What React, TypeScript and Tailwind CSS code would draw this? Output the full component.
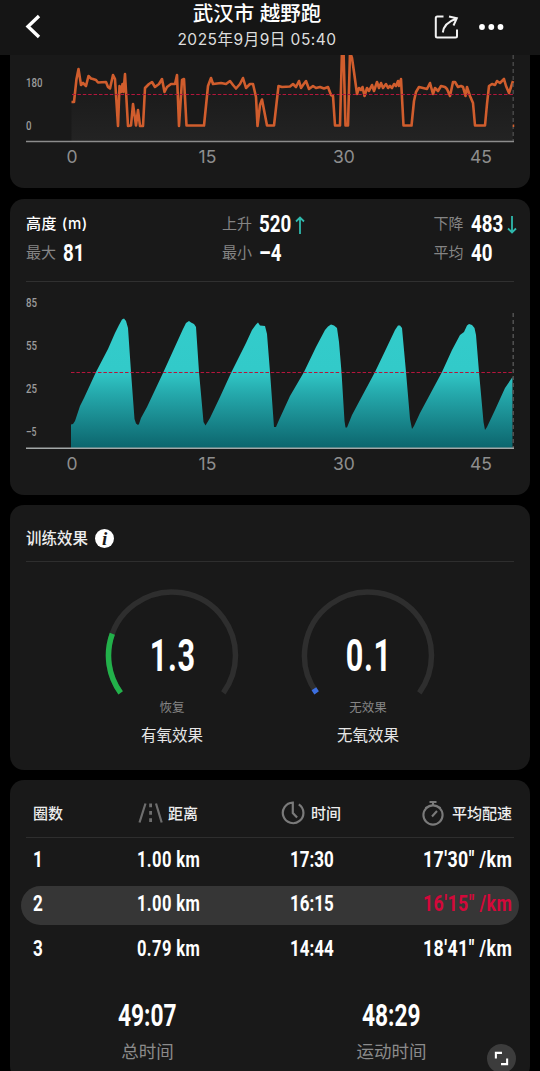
import type { ReactNode } from "react";

const CJK = "font-['Inter','Noto_Sans_CJK_SC',sans-serif]";

const PULSE =
  "71.5,102 74,102 76.5,79 78.5,69 81,85 83,83 86,86 88.5,76 91,78.5 93,79 96,80 98,82.5 106,82 108,87 110,88.5 113,75 115,79 118,126 119.5,86 121,92 122.5,84 123.5,92 125,74 128,126 131,125.5 133,104 136,125.5 138,110 140,126 143,126 145,88 149,84 152,82 155,87 159,84 162,79 164.5,92 167,87 171,84 175,84 177,75 179,126 182,80 184,79 186.5,125.5 204,125.5 208,86 211,78 213,84 221,83 226,84 230,81 233,85 236,88.5 240,84 243,78 246,88 250,84 253,84 256,97 257.5,126 260,105 262,99.5 267,125.5 274,125.5 278.5,86 282,87 290,86.5 293,84 296,87 299,81 301,88 303,85 306,81 309,89 313,86 316,88 320,87 324,88.5 328,87 331,95 333,96 335,125.5 340,125.5 342,50 343.5,50 345.5,125.5 348,125.5 350,52 352,58 354,72 357,94 359,88 361,90 362.5,87 364.5,96 367,88 369,91 372,85 374,91 377,82 379,88 381,83 383,88 386,84 388,88 390,86 392,88 394,84 396,86 398,81 399,86 401,79 403.5,125.5 411.5,125.5 414,101 416,92 419,87 423,88 427,89 430,83 433,94 435,88 438,91 441,86 445,87 447,89 450,96 453,82 455,82 458,87 461,86 463,87 465.5,96 467,87 470,96 473,103 475,125.5 485,125.5 487,104 489,86 492,84 495,85 497,81 500,83 504,79 506,86 509,93 511,87 513,81";

const ALTITUDE =
  "71,448 71,424.5 73,424 75,421 77,415 80,406 84,398 96,372 108,349 115,333 119,325 122,319.5 124,318.5 126,321 128,328 131,372 134.5,419 136,423.5 138,425 139,424 141,418 147,407 163,373 173,351 183,329 186,323 189,321 191,322.5 194,324 196,327 199,372 203.5,422 205.5,425.5 207,423 210,418 220,397 231,373 241,353 246,343 252,330 256,324.5 258,322.5 260,325.5 265,326 267,334 270,372 274,427 276,427 279,420 290,396 304,372 316,347 325,330 328,326.5 331,324.5 334,325.5 337,328 339,342 341.5,372 344.5,421 345.5,427.5 347,427.5 352,415 360,400 375,372 386,349 395,330 398,325.5 400,325.5 402,328 403,339 406,372 410,419 412,429 414,426 420,413 442,372 452,350 460,335 464,332 467,325.5 469,324 472,325 474.5,328 476,335 479,372 483.5,422 485,430 487,427 495,410 505,388 512.5,377 512.5,448";

function Num({ children, className = "" }: { children: ReactNode; className?: string }) {
  return (
    <span
      className={`inline-block whitespace-nowrap font-[Roboto,sans-serif] font-bold ${className}`}
    >
      {children}
    </span>
  );
}

function Stat({ label, value, arrow }: { label: string; value: string; arrow?: "up" | "down" }) {
  return (
    <div className="flex h-[29px] items-center">
      <span className="w-[37px] shrink-0 whitespace-nowrap text-[15px] text-[#858585]">{label}</span>
      <span className="w-[36px] shrink-0">
        <Num className="origin-left scale-x-[.78] text-2xl leading-none">{value}</Num>
      </span>
      {arrow && (
        <svg
          className={`size-[18px] shrink-0 ${arrow === "down" ? "-ml-[4px] rotate-180" : "-ml-[4px]"}`}
          viewBox="0 0 18 18"
          fill="none"
          stroke="#2fb9ad"
          strokeWidth="1.8"
        >
          <path d="M9 18V1.5M5 5.5 9 1.5l4 4" />
        </svg>
      )}
    </div>
  );
}

function Ticks({ items, y }: { items: [string, number, number][]; y: number }) {
  return (
    <>
      {items.map(([label, ty, w]) => (
        <text
          key={label}
          x="26"
          y={ty}
          textLength={w}
          lengthAdjust="spacingAndGlyphs"
          fontSize="13"
          fill="#9b9b9b"
          className="font-[Roboto,sans-serif] font-medium"
        >
          {label}
        </text>
      ))}
      {[0, 15, 30, 45].map((m, i) => (
        <text
          key={m}
          x={[72, 207.5, 344, 481][i]}
          y={y}
          fontSize="17.5"
          textAnchor="middle"
          fill="#8e8e8e"
          className="font-[Inter,sans-serif]"
        >
          {m}
        </text>
      ))}
    </>
  );
}

function Gauge({
  value,
  sweep,
  color,
  level,
  name,
}: {
  value: string;
  sweep: number;
  color: string;
  level: string;
  name: string;
}) {
  return (
    <div className="flex w-[134px] flex-col items-center">
      <div className="relative h-[108px] w-[134px]">
        <svg className="block" width="134" height="108" viewBox="0 0 134 108" fill="none" strokeWidth="5.5">
          <g transform="rotate(144 67 67.5)">
            <circle cx="67" cy="67.5" r="63.5" stroke="#2e2e2e" pathLength="360" strokeDasharray="252 360" />
            <circle cx="67" cy="67.5" r="63.5" stroke={color} pathLength="360" strokeDasharray={`${sweep} 360`} />
          </g>
        </svg>
        <div className="absolute inset-x-0 top-[45px] pl-[2px] text-center">
          <Num className="scale-x-[.68] text-[45px] leading-none tracking-[1px]">{value}</Num>
        </div>
      </div>
      <span className="mt-[2px] text-[12.5px] leading-5 text-[#858585]">{level}</span>
      <span className="mt-2 text-[15.5px] leading-5 text-[#e6e6e6]">{name}</span>
    </div>
  );
}

const LAPS = [
  ["1", "1.00 km", "17:30", "17'30\" /km"],
  ["2", "1.00 km", "16:15", "16'15\" /km"],
  ["3", "0.79 km", "14:44", "18'41\" /km"],
];

export default function App() {
  return (
    <div className={`h-[1071px] w-[540px] overflow-hidden bg-black text-white ${CJK}`}>
      {/* Top bar */}
      <header className="flex h-[55px] bg-[#151515]">
        <div className="w-[130px] pl-[24px] pt-[13px]">
          <svg width="18" height="27" viewBox="0 0 18 27" fill="none" stroke="#fff" strokeWidth="3.4">
            <path d="M15 3 4 13.5l11 10.500" />
          </svg>
        </div>
        <div className="w-[254px] text-center">
          <h1 className="mt-[2px] text-[20.5px] font-medium leading-6">武汉市 越野跑</h1>
          <p className="mt-1 whitespace-nowrap text-[15.500px] leading-5 tracking-[0.500px] text-[#dedede]">
            2025年9月9日 05:40
          </p>
        </div>
        <div className="flex items-start gap-[18px] pl-[48.500px] pt-[14px]">
          <svg width="27" height="26" viewBox="0 0 27 26" fill="none" stroke="#f2f2f2" strokeWidth="2">
            <path d="M10.500 2.500H4.300Q2.800 2.500 2.800 4V22Q2.800 23.500 4.300 23.500H22.500Q24 23.500 24 22V15.500" />
            <path d="M9.800 18.500Q11 9 22.500 5M16 2.500 23.800 4.300 20.500 11.500" />
          </svg>
          <svg className="mt-[9px]" width="26" height="8" viewBox="0 0 26 8" fill="#fff">
            <circle cx="4" cy="4" r="2.900" />
            <circle cx="13.300" cy="4" r="2.900" />
            <circle cx="22.500" cy="4" r="2.900" />
          </svg>
        </div>
      </header>

      {/* Pulse chart */}
      <section className="mx-[10px] h-[133px] overflow-hidden rounded-b-[14px] bg-[#191919]">
        <svg className="block" width="520" height="133" viewBox="10 55 520 133" fill="none">
          <defs>
            <linearGradient id="pulse" gradientUnits="userSpaceOnUse" x1="0" y1="80" x2="0" y2="141">
              <stop offset="0" stopColor="#191919" />
              <stop offset="1" stopColor="#232323" />
            </linearGradient>
          </defs>
          <polygon points={`71.5,141 ${PULSE} 513,141`} fill="url(#pulse)" />
          <polyline points={PULSE} stroke="#d05d2d" strokeWidth="2.6" strokeLinejoin="round" />
          <path d="M513.200 55V141" stroke="#4e4e4e" strokeWidth="1.300" strokeDasharray="4 3" />
          <path d="M72 94.500H513" stroke="#b5163c" strokeWidth="1.200" strokeDasharray="3.500 1.900" />
          <path d="M513.500 124.500v2.500" stroke="#d4602e" strokeWidth="1.500" />
          <path d="M26 141.500H514" stroke="#8c8c8c" strokeWidth="1.400" />
          <Ticks items={[["180", 87, 16.5], ["0", 129.5, 5.5]]} y={163.3} />
        </svg>
      </section>

      {/* Altitude */}
      <section className="mx-[10px] mt-[11px] h-[295.500px] rounded-[14px] bg-[#191919]">
        <div className="mx-4 flex h-[83px] border-b border-[#303030] pt-[11px]">
          <div className="w-[196px]">
            <div className="flex h-[29px] items-center text-[15px] font-medium tracking-[0.6px]">高度 (m)</div>
            <Stat label="最大" value="81" />
          </div>
          <div className="w-[211.500px]">
            <Stat label="上升" value="520" arrow="up" />
            <Stat label="最小" value="–4" />
          </div>
          <div className="w-[80px]">
            <Stat label="下降" value="483" arrow="down" />
            <Stat label="平均" value="40" />
          </div>
        </div>
        <svg className="block" width="520" height="212" viewBox="10 282 520 212" fill="none">
          <defs>
            <linearGradient id="alt" gradientUnits="userSpaceOnUse" x1="0" y1="318" x2="0" y2="448">
              <stop offset="0" stopColor="#33cccb" />
              <stop offset=".4" stopColor="#32cac9" />
              <stop offset=".58" stopColor="#25a9ac" />
              <stop offset="1" stopColor="#0c656d" />
            </linearGradient>
          </defs>
          <polygon points={ALTITUDE} fill="url(#alt)" />
          <path d="M513.200 313V448" stroke="#5a5a5a" strokeWidth="1.300" strokeDasharray="4 3" />
          <path d="M71 372.500H513.500" stroke="#b5163c" strokeWidth="1.200" strokeDasharray="3.500 1.900" />
          <path d="M26 448.200H514" stroke="#a3a8a8" strokeWidth="1.500" />
          <Ticks items={[["85", 306.5, 11], ["55", 349.5, 11], ["25", 392.5, 11], ["–5", 435.5, 10.5]]} y={470} />
        </svg>
      </section>

      {/* Training effect */}
      <section className="mx-[10px] mt-[10.500px] h-[264.500px] rounded-[14px] bg-[#191919]">
        <div className="mx-4 flex h-[57px] items-center gap-[7px] border-b border-[#2e2e2e] pt-[10px]">
          <h2 className="mt-[2px] text-[15.500px] font-medium text-[#ededed]">训练效果</h2>
          <span className="flex size-[19px] items-center justify-center rounded-full bg-white font-['Liberation_Serif',serif] text-[19px] font-bold italic leading-none text-[#191919]">
            i
          </span>
        </div>
        <div className="flex gap-[62px] pl-[95px] pt-[26px]">
          <Gauge value="1.3" sweep={56} color="#22b14a" level="恢复" name="有氧效果" />
          <Gauge value="0.1" sweep={4.5} color="#3c6fe0" level="无效果" name="无氧效果" />
        </div>
      </section>

      {/* Laps */}
      <section className="relative mx-[10px] mt-[10.500px] h-[300px] rounded-[14px] bg-[#191919]">
        <div className="mx-4 flex h-[57.500px] items-center border-b border-[#2e2e2e] pl-[7px] pt-[12px] text-[15px] font-medium text-[#ededed]">
          <span className="w-[104px]">圈数</span>
          <span className="flex w-[144px] items-center gap-[5px]">
            <svg className="-mt-[2px]" width="26" height="22" viewBox="0 0 26 22" fill="none" stroke="#6e6e6e" strokeWidth="2.200">
              <path d="M8.500 1.500 2.500 20.500M19 1.500l5.700 19" />
              <path d="M13.600 1.500V20.500" strokeDasharray="3.800 3.600" strokeWidth="2.800" />
            </svg>
            距离
          </span>
          <span className="flex w-[140px] items-center gap-[6px]">
            <svg className="-mt-[2px]" width="24" height="24" viewBox="0 0 24 24" fill="none" stroke="#7a7a7a" strokeWidth="2.200">
              <path d="M17.800 3.300A10.300 10.300 0 1 1 11.800 1.600V12l4.300 4.600" />
            </svg>
            时间
          </span>
          <span className="flex items-center gap-[7px] whitespace-nowrap">
            <svg className="-mt-[3px]" width="24" height="26" viewBox="0 0 24 26" fill="none" stroke="#7a7a7a" strokeWidth="2.100">
              <circle cx="12" cy="15" r="9.600" />
              <path d="M8.500 2h7M12 2v3.500M11 16.500 16 11M4.500 7 6 8.500M19.500 7 18 8.500" />
            </svg>
            平均配速
          </span>
        </div>
        {LAPS.map(([lap, dist, time, pace], i) => (
          <div
            key={lap}
            className={`mx-[11px] grid grid-cols-[103.500px_153px_133px_1fr] items-center pl-3 text-[22.500px] leading-none ${
              i === 1 ? "mt-[4px] h-[39px] rounded-full bg-[#363636] pb-[3px]" : i === 0 ? "h-[44px]" : "mt-[2px] h-[44px]"
            }`}
          >
            <Num className="origin-left scale-x-[.76]">{lap}</Num>
            <Num className="origin-left scale-x-[.735] tracking-[0.5px]">{dist}</Num>
            <Num className="origin-left scale-x-[.755]">{time}</Num>
            <Num className={`origin-left scale-x-[.79] tracking-[0.5px] ${i === 1 ? "text-[#d3083a]" : ""}`}>{pace}</Num>
          </div>
        ))}
        <div className="mt-[28px] flex pl-[15px]">
          <div className="w-[244px] pl-px text-center">
            <Num className="scale-x-[.71] text-[32px] leading-none">49:07</Num>
            <div className="mt-[8px] text-[17.500px] leading-6 text-[#8b8b8b]">总时间</div>
          </div>
          <div className="w-[244px] pl-px text-center">
            <Num className="scale-x-[.71] text-[32px] leading-none">48:29</Num>
            <div className="mt-[8px] text-[17.500px] leading-6 text-[#8b8b8b]">运动时间</div>
          </div>
        </div>
        {/* Expand button */}
        <button className="absolute right-[14px] top-[264px] flex size-[29px] items-center justify-center rounded-full bg-[#3c3c3c]">
          <svg width="15" height="15" viewBox="0 0 16 16" fill="none" stroke="#fff" strokeWidth="2.200">
            <path d="M2 8V2h6.500M14 8V14H7.500" />
          </svg>
        </button>
      </section>
    </div>
  );
}
